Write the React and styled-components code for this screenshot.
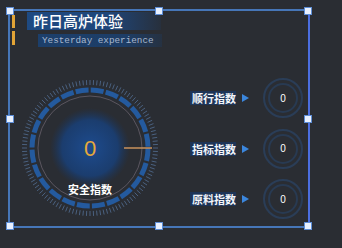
import React from "react";
import styled, { createGlobalStyle } from "styled-components";

const GlobalStyle = createGlobalStyle`
  html, body {
    margin: 0;
    padding: 0;
    background: #2a2d33;
  }
  body {
    width: 342px;
    height: 248px;
    overflow: hidden;
    font-family: "Noto Sans CJK SC", "Noto Sans", sans-serif;
  }
`;

const indexes = [
  { label: "顺行指数", value: 0 },
  { label: "指标指数", value: 0 },
  { label: "原料指数", value: 0 },
];

const App = () => (
  <Page>
    <GlobalStyle />
    <Header>
      <Bracket />
      <TitleBlock>
        <Title>昨日高炉体验</Title>
        <Subtitle>Yesterday experience</Subtitle>
      </TitleBlock>
    </Header>
    <Body>
      <Gauge value={0} label="安全指数" />
      <IndexList>
        {indexes.map(item => (
          <IndexRow key={item.label}>
            <IndexLabel>{item.label}</IndexLabel>
            <Arrow />
            <Dial value={item.value} />
          </IndexRow>
        ))}
      </IndexList>
    </Body>
    <Selection>
      {handles.map(([x, y]) => (
        <Handle key={`${x}-${y}`} $x={x} $y={y} />
      ))}
    </Selection>
  </Page>
);

const handles = [
  [0, 0],
  [50, 0],
  [100, 0],
  [0, 50],
  [100, 50],
  [0, 100],
  [50, 100],
  [100, 100],
];

const ticks = Array.from({ length: 120 }, (_, i) => (i * 360) / 120);

const Gauge = ({ value, label }) => (
  <GaugeBox>
    <svg width="150" height="150" viewBox="0 0 150 150">
      <defs>
        <radialGradient id="core" cx="50%" cy="50%" r="50%">
          <stop offset="0%" stopColor="#1d4b8e" />
          <stop offset="70%" stopColor="#1b3d6e" />
          <stop offset="100%" stopColor="#1b3458" stopOpacity="0" />
        </radialGradient>
      </defs>
      {ticks.map(a => {
        const r = (a * Math.PI) / 180;
        return (
          <line
            key={a}
            x1={75 + Math.cos(r) * 63}
            y1={75 + Math.sin(r) * 63}
            x2={75 + Math.cos(r) * 68}
            y2={75 + Math.sin(r) * 68}
            stroke="#4a6180"
            strokeWidth="1"
          />
        );
      })}
      <circle
        cx="75"
        cy="75"
        r="58"
        fill="none"
        stroke="#245a9e"
        strokeWidth="5"
        strokeDasharray="13 2.2"
      />
      <circle cx="75" cy="75" r="52" fill="none" stroke="#5b5660" strokeWidth="1" />
      <circle cx="75" cy="75" r="40" fill="url(#core)" />
      <line x1="109" y1="75" x2="137" y2="75" stroke="#c8925c" strokeWidth="1.5" />
      <text
        x="75"
        y="83"
        textAnchor="middle"
        fill="#e6a93b"
        fontSize="22"
        fontFamily="Liberation Sans, sans-serif"
      >
        {value}
      </text>
      <text
        x="75"
        y="121"
        textAnchor="middle"
        fill="#ffffff"
        fontSize="11"
        fontWeight="bold"
        fontFamily="Noto Sans CJK SC, sans-serif"
      >
        {label}
      </text>
    </svg>
  </GaugeBox>
);

const Dial = ({ value }) => (
  <DialBox>
    <DialValue>{value}</DialValue>
  </DialBox>
);

const Arrow = () => (
  <svg width="7" height="8" viewBox="0 0 7 8">
    <path d="M0 0 L7 4 L0 8 Z" fill="#3b86dc" />
  </svg>
);

const Page = styled.div`
  position: relative;
  width: 342px;
  height: 248px;
  box-sizing: border-box;
  padding: 12px 0 0 12px;
`;

const Header = styled.header`
  display: flex;
  align-items: flex-start;
  gap: 12px;
`;

const Bracket = styled.div`
  width: 3px;
  height: 30px;
  margin-top: 3px;
  background: linear-gradient(
    #e2a436 0 45%,
    transparent 45% 55%,
    #e2a436 55% 100%
  );
`;

const TitleBlock = styled.div`
  display: flex;
  flex-direction: column;
  gap: 4px;
`;

const Title = styled.div`
  width: 128px;
  height: 18px;
  padding-left: 6px;
  font-size: 15px;
  line-height: 17px;
  font-weight: 500;
  color: #ffffff;
  background: linear-gradient(90deg, #1e4a82 0%, #1f467a 60%, rgba(30, 60, 100, 0.2) 100%);
`;

const Subtitle = styled.div`
  margin-left: 11px;
  width: 120px;
  height: 13px;
  padding-left: 4px;
  font-family: "Liberation Mono", monospace;
  font-size: 9.3px;
  line-height: 13px;
  color: #a8b8cf;
  background: linear-gradient(90deg, #1c3f6b 0%, #1d3d66 70%, rgba(28, 60, 100, 0.3) 100%);
`;

const Body = styled.div`
  display: flex;
  margin-top: 26px;
  margin-left: 3px;
`;

const GaugeBox = styled.div`
  width: 150px;
  height: 150px;
`;

const IndexList = styled.div`
  display: flex;
  flex-direction: column;
  margin-left: 25px;
`;

const IndexRow = styled.div`
  display: flex;
  align-items: center;
  gap: 6px;
  height: 50.5px;
`;

const IndexLabel = styled.span`
  width: 46px;
  text-align: right;
  font-size: 11px;
  line-height: 14px;
  font-weight: bold;
  color: #f2f5fa;
  background: #1d3457;
`;

const DialBox = styled.div`
  display: flex;
  align-items: center;
  justify-content: center;
  box-sizing: border-box;
  width: 40px;
  height: 40px;
  margin-left: 8px;
  border-radius: 50%;
  border: 2px solid #2a3d57;
  box-shadow: inset 0 0 0 3px #2a2d33, inset 0 0 0 5px #283a52;
`;

const DialValue = styled.span`
  font-family: "Liberation Sans", sans-serif;
  font-size: 10px;
  color: #ffffff;
`;

const Selection = styled.div`
  position: absolute;
  left: 8px;
  top: 9px;
  width: 298px;
  height: 215px;
  border: 2px solid #4676b8;
  border-right-color: #4b6ee0;
  pointer-events: none;
`;

const Handle = styled.div`
  position: absolute;
  left: calc(${p => p.$x}% - 4px);
  top: calc(${p => p.$y}% - 4px);
  width: 6px;
  height: 6px;
  background: #e9f1ff;
  border: 1px solid #5e8ed6;
`;

export default App;
